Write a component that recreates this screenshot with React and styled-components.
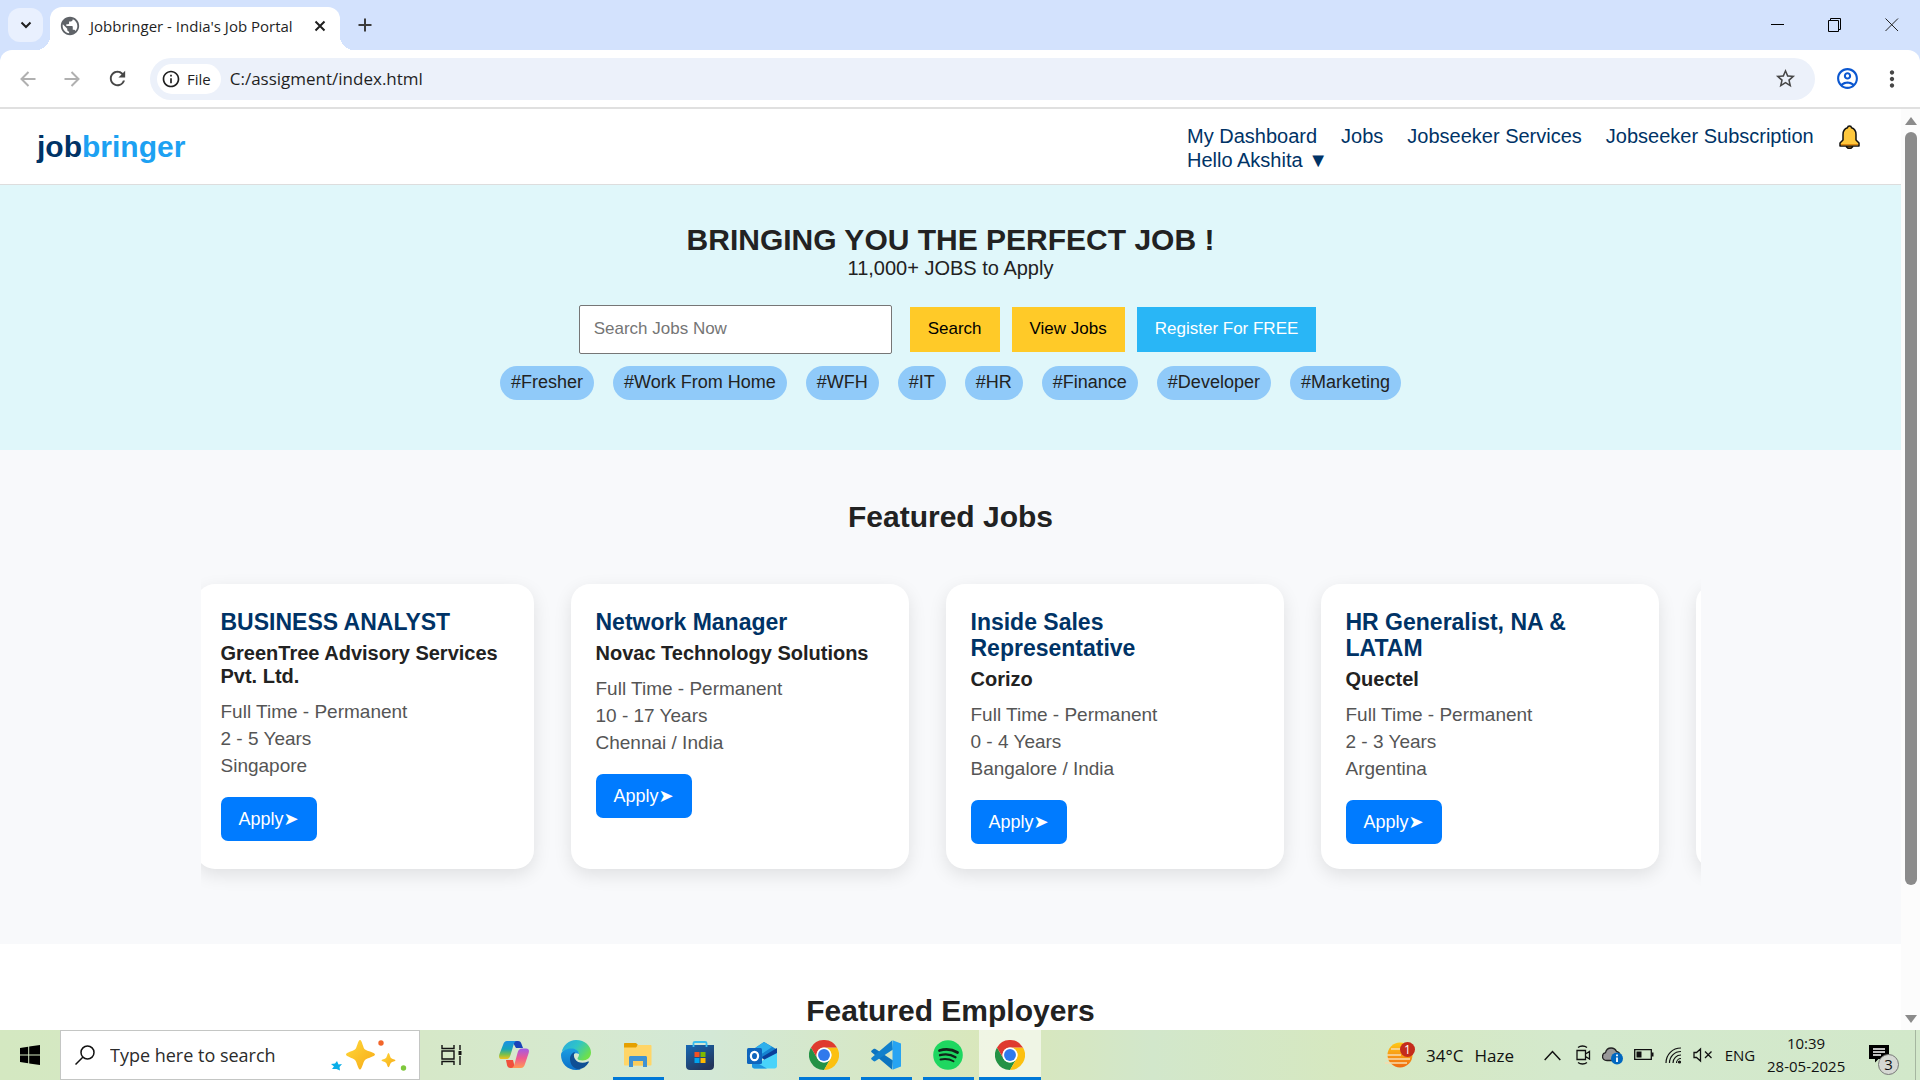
import React from "react";
import styled, { createGlobalStyle, css } from "styled-components";
import {
  MdPublic,
  MdStarBorder,
  MdOutlineAccountCircle,
  MdMoreVert,
  MdRefresh,
  MdInfoOutline,
} from "react-icons/md";

const uiFont = `"Segoe UI", "Open Sans", sans-serif`;
const pageFont = `Arial, "Liberation Sans", "DejaVu Sans", sans-serif`;

const GlobalStyle = createGlobalStyle`
  * { box-sizing: border-box; margin: 0; padding: 0; }
  body { overflow: hidden; background: #fff; }
  button, input { font: inherit; border: 0; background: none; color: inherit; }
  a { text-decoration: none; color: inherit; }
  svg { display: block; flex: none; }
`;

const Desktop = styled.div`
  height: 100vh;
  display: flex;
  flex-direction: column;
  font-family: ${uiFont};
`;

/* ---------- browser chrome ---------- */
const TabStrip = styled.header`
  display: flex;
  align-items: flex-end;
  height: 50px;
  padding-left: 8px;
  background: #d3e2fd;
`;
const TabSearch = styled.button`
  width: 35px;
  height: 34px;
  margin: 0 7px 8px 0;
  border-radius: 12px;
  background: #e9f0fe;
  display: grid;
  place-items: center;
`;
const Tab = styled.div`
  display: flex;
  align-items: center;
  width: 290px;
  height: 43px;
  padding: 0 11px 5px 9px;
  border-radius: 12px 12px 0 0;
  background: #fff;
  color: #1f1f1f;
  position: relative;
  &::before, &::after {
    content: "";
    position: absolute;
    bottom: 0;
    width: 14px;
    height: 14px;
  }
  &::before {
    left: -14px;
    background: radial-gradient(circle at 0 0, transparent 14px, #fff 14px);
  }
  &::after {
    right: -14px;
    background: radial-gradient(circle at 100% 0, transparent 14px, #fff 14px);
  }
`;
const TabTitle = styled.span`
  flex: 1;
  padding-left: 9px;
  font-size: 15px;
  line-height: 20px;
  white-space: nowrap;
`;
const PlainButton = styled.button`
  display: grid;
  place-items: center;
  width: ${(p) => p.$w || 44}px;
  height: ${(p) => p.$h || 44}px;
`;
const WindowButtons = styled.div`
  display: flex;
  margin-left: auto;
`;
const Toolbar = styled.div`
  display: flex;
  align-items: center;
  height: 59px;
  padding: 0 6px;
  background: #fff;
  border-radius: 12px 12px 0 0;
  border-bottom: 2px solid #e0e0e0;
  color: #474747;
`;
const ToolbarBack = styled.div`
  background: #d3e2fd;
  flex: none;
`;
const Omnibox = styled.div`
  flex: 1;
  display: flex;
  align-items: center;
  height: 42px;
  margin: 0 10px;
  padding: 0 18px 0 7px;
  border-radius: 21px;
  background: #ecf1fa;
`;
const FileChip = styled.button`
  display: flex;
  align-items: center;
  gap: 6px;
  height: 30px;
  padding: 0 10px 0 4px;
  border-radius: 15px;
  background: #fff;
  color: #1f1f1f;
  font-size: 15px;
  font-weight: 500;
`;
const Address = styled.input`
  flex: 1;
  padding-left: 9px;
  font-size: 17px;
  color: #1f1f1f;
  outline: none;
`;

/* ---------- web page ---------- */
const Viewport = styled.div`
  flex: 1;
  min-height: 0;
  display: flex;
  overflow: hidden;
  font-family: ${pageFont};
`;
const Page = styled.div`
  flex: 1;
  min-width: 0;
  height: 100%;
  overflow: hidden;
  color: #222;
  background: #fff;
`;
const Scrollbar = styled.div`
  width: 19px;
  padding: 8px 3px 7px 4px;
  display: flex;
  flex-direction: column;
  align-items: center;
  gap: 7px;
  background: #fcfcfc;
`;
const ScrollTrack = styled.div`
  flex: 1;
  width: 12px;
`;
const Thumb = styled.div`
  height: 86%;
  border-radius: 6px;
  background: #8b8b8b;
`;
const SiteHeader = styled.header`
  display: flex;
  justify-content: space-between;
  align-items: center;
  min-height: 76px;
  padding: 0 37px;
  border-bottom: 1px solid #ddd;
  color: #003366;
`;
const Logo = styled.a`
  font-size: 30px;
  line-height: 34px;
  font-weight: bold;
  span { color: #1da1f2; }
`;
const Nav = styled.nav`
  display: flex;
  flex-wrap: wrap;
  align-items: center;
  column-gap: 24px;
  max-width: 677px;
  padding-top: 3px;
  font-size: 20px;
  line-height: 23px;
`;
const Hero = styled.section`
  display: flex;
  flex-direction: column;
  align-items: center;
  padding: 38px 20px 50px;
  background: #e0f7fa;
  text-align: center;
`;
const Heading = styled.h2`
  font-size: 30px;
  line-height: 34px;
  text-align: center;
`;
const HeroText = styled.p`
  font-size: 20px;
  line-height: 23px;
`;
const SearchForm = styled.form`
  display: flex;
  align-items: center;
  margin: 25px 0 12px;
`;
const SearchInput = styled.input`
  width: 313px;
  height: 49px;
  margin-right: 12px;
  padding: 0 14px 2px;
  border: 1px solid #767676;
  border-radius: 2px;
  background: #fff;
  font-size: 17px;
  &::placeholder { color: #757575; opacity: 1; }
`;
const HeroButton = styled.button`
  height: 45px;
  margin: 0 6px;
  padding: 0 18px 2px;
  background: ${(p) => (p.$primary ? "#29b6f6" : "#ffca28")};
  color: ${(p) => (p.$primary ? "#fff" : "#000")};
  font-size: 17px;
`;
const Tags = styled.div`
  display: flex;
  gap: 19px;
`;
const Tag = styled.a`
  padding: 6px 11px 8px;
  border-radius: 17px;
  background: #90caf9;
  font-size: 18px;
  line-height: 20px;
`;
const Section = styled.section`
  padding: 50px 0;
  background: ${(p) => (p.$tint ? "#f8f9fb" : "#fff")};
`;
const Carousel = styled.div`
  max-width: 1500px;
  margin: 25px auto 0;
  padding: 25px 0;
  overflow: hidden;
`;
const Track = styled.div`
  display: flex;
  gap: 37px;
  margin-left: -5px;
`;
const Card = styled.article`
  flex: 0 0 338px;
  padding: 25px;
  border-radius: 19px;
  background: #fff;
  box-shadow: 0 6px 18px rgba(0, 0, 0, 0.1);
`;
const JobTitle = styled.h3`
  font-size: 23px;
  line-height: 26px;
  color: #003366;
`;
const Company = styled.h4`
  margin: 7px 0 13px;
  font-size: 20px;
  line-height: 23px;
`;
const Detail = styled.p`
  margin-bottom: 6px;
  font-size: 19px;
  line-height: 21px;
  color: #555;
`;
const ApplyButton = styled.button`
  height: 44px;
  margin-top: 15px;
  padding: 0 18px;
  border-radius: 7px;
  background: #007bff;
  color: #fff;
  font-size: 18px;
`;

/* ---------- taskbar ---------- */
const Taskbar = styled.footer`
  display: flex;
  height: 50px;
  flex: none;
  background: linear-gradient(90deg, #d4e8c1 0%, #d6e8c8 22%, #d6e9cf 30%, #d3e8d6 37%, #d9e7ba 52%, #d2e7cb 60%, #d6e8c0 70%, #d4e9cd 82%, #d2e8ca 100%);
  color: #111;
`;
const Tile = styled.button`
  position: relative;
  width: ${(p) => p.$w || 62}px;
  display: grid;
  place-items: center;
  ${(p) => p.$active && css`background: rgba(255, 255, 255, 0.6);`}
  ${(p) => (p.$running || p.$active) && css`
    &::after {
      content: "";
      position: absolute;
      bottom: 0;
      left: ${p.$active ? 0 : 6}px;
      right: ${p.$active ? 0 : 5}px;
      height: 3px;
      background: #0078d7;
    }
  `}
`;
const TaskSearch = styled.label`
  display: flex;
  align-items: center;
  width: 360px;
  padding: 0 11px 0 14px;
  border: 1px solid #c4c6c4;
  background: #fff;
`;
const TaskInput = styled.input`
  flex: 1;
  min-width: 0;
  padding-left: 15px;
  font-size: 18px;
  outline: none;
  &::placeholder { color: #2b2b2b; opacity: 1; }
`;
const Tray = styled.div`
  display: flex;
  align-items: center;
  margin-left: auto;
`;
const Weather = styled.button`
  display: flex;
  align-items: center;
  gap: 11px;
  margin-right: 30px;
  font-size: 17px;
`;
const TrayIcons = styled.div`
  display: flex;
  align-items: center;
  gap: 11px;
  svg:first-child { margin-right: 4px; }
`;
const Lang = styled.button`
  width: 54px;
  font-size: 15px;
`;
const Clock = styled.button`
  width: 78px;
  font-size: 15px;
  line-height: 23px;
  text-align: center;
  white-space: nowrap;
`;
const ActionCenter = styled.button`
  display: flex;
  align-items: center;
  width: 70px;
  height: 50px;
  padding-left: 24px;
`;
const ShowDesktop = styled.span`
  width: 5px;
  height: 50px;
  border-left: 1px solid #a5b6a0;
`;

/* ---------- icons ---------- */
const Stroke = ({ d, w, h, color = "#1f1f1f", sw = 2, ...rest }) => (
  <svg width={w} height={h} viewBox={`0 0 ${w} ${h}`} fill="none" stroke={color} strokeWidth={sw} {...rest}>
    <path d={d} />
  </svg>
);

const Bell = () => (
  <svg width="23" height="24" viewBox="0 0 23 24">
    <path d="M8.500 20h6v2l-1.500 1.200h-3L8.500 22z" fill="#c27a0e" stroke="#111" strokeWidth="1.500" />
    <path d="M11.500 1c1.200 0 1.900.8 2 1.800 3 1 4.500 3.500 4.500 6.700v5.500l3 3V21H2v-3l3-3V9.500c0-3.200 1.500-5.700 4.500-6.700.1-1 .8-1.800 2-1.800z" fill="#ffc83d" stroke="#111" strokeWidth="1.500" strokeLinejoin="round" />
    <path d="M3 19h17v1.300H3z" fill="#e08a12" />
  </svg>
);

const WindowsLogo = () => (
  <svg width="20" height="20" viewBox="0 0 20 20" fill="#000">
    <path d="M0 3l8.200-1.200v7.700H0zM9.200 1.600L20 0v9.500H9.200zM0 10.500h8.200v7.700L0 17zM9.200 10.500H20V20L9.200 18.400z" />
  </svg>
);

const Sparkles = () => (
  <svg width="78" height="34" viewBox="0 0 78 34">
    <defs>
      <linearGradient id="sp" x1="0" y1="0" x2="1" y2="1">
        <stop offset="0" stopColor="#ffd93b" />
        <stop offset="1" stopColor="#f7a916" />
      </linearGradient>
    </defs>
    <path d="M30 2c2 0 3 8 5 9.500s10 3 10 5-8 3.500-10 5.500-3 9.500-5 9.500-3-7.500-5-9.500-9-3.500-9-5.500 7-3.500 9-5S28 2 30 2z" fill="url(#sp)" />
    <path d="M58.500 15c1 0 1.500 4 2.500 5s4.500 1.300 4.500 2.300-3.500 1.500-4.500 2.500-1.500 4.500-2.500 4.500-1.500-3.500-2.500-4.500-4.500-1.500-4.500-2.500 3.500-1.300 4.500-2.300 1.500-5 2.500-5z" fill="url(#sp)" />
    <path d="M7 23l1.500 3.500L12 26l-2.500 3 .5 3.500L6.500 31 2 31l2-2.500L1 26l4-.5z" fill="#0aaee8" />
    <circle cx="51" cy="5" r="2.700" fill="#f2652a" />
    <circle cx="73.500" cy="30" r="2.700" fill="#7ec83c" />
  </svg>
);

const Copilot = () => (
  <svg width="30" height="28" viewBox="0 0 30 28">
    <defs>
      <linearGradient id="cpa" x1="0" y1="0" x2="0" y2="1">
        <stop offset="0" stopColor="#1b8fe6" />
        <stop offset=".45" stopColor="#16a5b8" />
        <stop offset=".75" stopColor="#7cc04b" />
        <stop offset="1" stopColor="#f5c21b" />
      </linearGradient>
      <linearGradient id="cpb" x1="0" y1="0" x2="0" y2="1">
        <stop offset="0" stopColor="#a05be8" />
        <stop offset=".5" stopColor="#ef5a8f" />
        <stop offset="1" stopColor="#ff9a55" />
      </linearGradient>
    </defs>
    <path d="M13 0h6c2 0 3 1 3.500 3L24 7h-7z" fill="#1a44b8" />
    <path d="M8 0h10c-2 0-3 2-3.500 4L11.500 14c-.8 3-2 4-4.500 4H3c-3 0-3.500-2-2.500-5L4 4c.8-2.500 2-4 4-4z" fill="url(#cpa)" />
    <path d="M16 27H11.500c-2 0-3-1-3.500-3L7 19h7z" fill="#f0503c" />
    <path d="M22 27H12c2 0 3-2 3.500-4L18.500 12c.8-3 2-4.500 4.500-4.500H27c3 0 3.500 2 2.500 5L26 23c-.8 2.500-2 4-4 4z" fill="url(#cpb)" />
  </svg>
);

const Edge = () => (
  <svg width="30" height="30" viewBox="0 0 30 30">
    <defs>
      <linearGradient id="eg1" x1="0" y1="0" x2="1" y2=".6">
        <stop offset="0" stopColor="#2aa8e0" />
        <stop offset=".5" stopColor="#2fc4c8" />
        <stop offset="1" stopColor="#6fe04a" />
      </linearGradient>
      <linearGradient id="eg2" x1="0" y1="0" x2="0" y2="1">
        <stop offset="0" stopColor="#1b9de2" />
        <stop offset="1" stopColor="#0c70c8" />
      </linearGradient>
    </defs>
    <path d="M.8 12C2 5 8 0 15 0c9 0 15 6 15 12.500 0 5-4 8-8.500 8-3 0-5-1-5-2s1.500-1.800 1.500-4c0-3-3-5.500-7-5.500C6 9 2 11 .8 12z" fill="url(#eg1)" />
    <path d="M0 15c0-4 5-6.500 10.500-6.500 4.500 0 7.500 2.500 7.500 5.500-4-2-7.500 1-7.500 5.500 0 5 4 9.500 9.500 9.800C18 30 16 30 15 30 6.500 30 0 23.500 0 15z" fill="url(#eg2)" />
    <path d="M9 19c0-4 2.500-6.500 5-7-1.500 2-1.500 4.500 0 7 2.500 4 8 5 13 2.500.8-.3 1.200.2.800.8-2.300 4.300-6 6.500-9.800 7C12.500 29 9 24 9 19z" fill="#0f4f94" />
  </svg>
);

const Explorer = () => (
  <svg width="28" height="24" viewBox="0 0 28 24">
    <path d="M1 0h11l1.500 1.500V5H0V1c0-.6.4-1 1-1z" fill="#e5a000" />
    <path d="M14 2h12.500c.6 0 1 .4 1 1v18.500c0 .6-.4 1-1 1H1c-.6 0-1-.4-1-1V4.500h12z" fill="#ffd567" />
    <path d="M5 24V14.500c0-1 .7-1.500 1.500-1.500h15c.8 0 1.500.5 1.500 1.500V24h-4v-6H9v6z" fill="#3f92d2" />
    <path d="M9 18h10v4.500H9z" fill="#f9cc5c" />
  </svg>
);

const Store = () => (
  <svg width="30" height="30" viewBox="0 0 30 30">
    <defs>
      <linearGradient id="st" x1="0" y1="0" x2=".6" y2="1">
        <stop offset="0" stopColor="#1668b4" />
        <stop offset="1" stopColor="#24365c" />
      </linearGradient>
    </defs>
    <path d="M1 5h28v21c0 2.500-1.500 4-4 4H5c-2.500 0-4-1.500-4-4z" fill="url(#st)" />
    <path d="M8.500 7V3c0-1 .5-1 1.500-1h10c1 0 1.500 0 1.500 1v4" fill="none" stroke="#39bdf0" strokeWidth="1.800" />
    <path d="M9.500 12h5v5h-5z" fill="#f25022" />
    <path d="M15.500 12h5v5h-5z" fill="#7fba00" />
    <path d="M9.500 18h5v5h-5z" fill="#00a4ef" />
    <path d="M15.500 18h5v5h-5z" fill="#ffb900" />
  </svg>
);

const Outlook = () => (
  <svg width="30" height="27" viewBox="0 0 30 27">
    <path d="M5 8L17 0l13 7.500V12L17 17 5 14z" fill="#1583d0" />
    <path d="M9 5.500L17 0l8 5-12 8z" fill="#2fb0ec" />
    <path d="M30 6L15 15l3 4 12-7z" fill="#0a3f9a" />
    <path d="M5 24l25-13v13c0 1.500-1 2.500-2.500 2.500H7.500C6 26.500 5 25.500 5 24z" fill="#49d3fa" />
    <path d="M5 18l15 8.500H7.500C6 26.500 5 25.500 5 24z" fill="#1f96e0" />
    <rect y="6" width="15" height="16" rx="1.500" fill="#0f65bd" />
    <ellipse cx="7.500" cy="14" rx="3.600" ry="4.200" fill="none" stroke="#fff" strokeWidth="2.200" />
  </svg>
);

const Chrome = () => (
  <svg width="30" height="30" viewBox="0 0 48 48">
    <path d="M3.200 12A24 24 0 0 0 24 48L34.400 30A12 12 0 0 1 13.600 30Z" fill="#249245" />
    <path d="M24 48A24 24 0 0 0 44.800 12L24 12A12 12 0 0 1 34.400 30Z" fill="#fcc010" />
    <path d="M44.800 12A24 24 0 0 0 3.200 12L13.600 30A12 12 0 0 1 24 12Z" fill="#df3a2f" />
    <circle cx="24" cy="24" r="12" fill="#fff" />
    <circle cx="24" cy="24" r="9.500" fill="#3079ec" />
  </svg>
);

const Code = () => (
  <svg width="30" height="30" viewBox="0 0 30 30">
    <path d="M2.500 9L.6 10.500c-.6.6-.6 1.200 0 1.800L21 29.500l1-9L4.500 9c-.7-.5-1.400-.5-2 0z" fill="#0c74c0" />
    <path d="M2.500 21L.6 19.500c-.6-.6-.6-1.200 0-1.800L21 .5l1 9L4.500 21c-.7.500-1.400.5-2 0z" fill="#1180cc" />
    <path d="M21.500.2L30 3.500v23l-8.500 3.300z" fill="#27a4f2" />
  </svg>
);

const Spotify = () => (
  <svg width="30" height="30" viewBox="0 0 30 30">
    <circle cx="15" cy="15" r="14.800" fill="#1ed760" />
    <g fill="none" stroke="#10251a" strokeLinecap="round">
      <path d="M6.500 10.500c6-1.800 13-1 18 2" strokeWidth="2.800" />
      <path d="M7 15.200c5-1.400 11-.8 15.500 2" strokeWidth="2.300" />
      <path d="M7.500 19.500c4.500-1 9-.6 13 1.800" strokeWidth="1.900" />
    </g>
  </svg>
);

const Haze = () => (
  <svg width="30" height="28" viewBox="0 0 30 28">
    <defs>
      <linearGradient id="hz" x1="0" y1="0" x2="0" y2="1">
        <stop offset="0" stopColor="#ffc917" />
        <stop offset="1" stopColor="#ef6a10" />
      </linearGradient>
    </defs>
    <circle cx="15" cy="14" r="12.500" fill="url(#hz)" />
    <path d="M6 8h9M2 14h14M1 18h24M0 22h22" stroke="#f8dcae" strokeWidth="1.600" />
    <circle cx="22.500" cy="8.500" r="7.500" fill="#c42b1c" />
    <text x="22.500" y="13" fontSize="12" fill="#fff" textAnchor="middle" fontFamily="Open Sans">1</text>
  </svg>
);

const MeetNow = () => (
  <svg width="15" height="20" viewBox="0 0 15 20" fill="none" stroke="#111" strokeWidth="1.300">
    <path d="M1 5.500h8.500v9H1zM9.500 9l4-2.500v7.500l-4-2.500M2 2.500c2.500-2 6.500-2 9 0M2 17.500c2.500 2 6.500 2 9 0" />
  </svg>
);

const Cloud = () => (
  <svg width="21" height="20" viewBox="0 0 21 20">
    <path d="M5 15.500c-3 0-4.500-1.800-4.500-4 0-2 1.300-3.500 3-3.800C4.200 4.500 6.500 3 9.200 3c2.500 0 4.300 1.300 5.200 3.300 1.800.3 3.100 1.400 3.600 3.200L10 15.500z" fill="#999" stroke="#222" strokeWidth="1.300" />
    <circle cx="15" cy="13.500" r="6" fill="#0067c0" />
    <path d="M15 12.500v4.500M15 9.500v1.700" stroke="#fff" strokeWidth="1.800" />
  </svg>
);

const Battery = () => (
  <svg width="20" height="12" viewBox="0 0 20 12">
    <path d="M.7.700h16.600v9.600H.7z" fill="none" stroke="#111" strokeWidth="1.300" />
    <path d="M18 3.500h1.500v4H18z" fill="#111" />
    <path d="M2.500 2.500h5v6h-5z" fill="#111" />
  </svg>
);

const Wifi = () => (
  <svg width="17" height="17" viewBox="0 0 17 17" fill="none" stroke="#111" strokeWidth="1.200">
    <path d="M1 16C1 7.500 7.500 1 16 1M4.500 16c0-6.500 5-11.500 11.500-11.500M8 16c0-4.500 3.500-8 8-8M11.500 16c0-2.500 2-4.500 4.500-4.500" />
    <circle cx="14.500" cy="15" r="1" fill="#111" />
  </svg>
);

const Muted = () => (
  <svg width="20" height="17" viewBox="0 0 20 17" fill="none" stroke="#111" strokeWidth="1.300">
    <path d="M1 5.500h2.500l4-3.500v12l-4-3.500H1zM12 4.500l6.500 6.500M18.500 4.500L12 11" />
  </svg>
);

const Notifications = () => (
  <svg width="32" height="28" viewBox="0 0 32 28" overflow="visible">
    <path d="M0 4h20v14H9.500L6 21.500V18H0z" fill="#000" />
    <path d="M4 8h12M4 11h12M4 14h8" stroke="#fff" strokeWidth="1.300" />
    <circle cx="19.500" cy="23.500" r="10" fill="#d5d8d3" stroke="#777" />
    <text x="19.500" y="29" fontSize="15" fill="#111" textAnchor="middle" fontFamily="Open Sans">3</text>
  </svg>
);

/* ---------- data ---------- */
const navLinks = ["My Dashboard", "Jobs", "Jobseeker Services", "Jobseeker Subscription"];
const tags = ["#Fresher", "#Work From Home", "#WFH", "#IT", "#HR", "#Finance", "#Developer", "#Marketing"];
const jobs = [
  { title: "BUSINESS ANALYST", company: "GreenTree Advisory Services Pvt. Ltd.", years: "2 - 5 Years", place: "Singapore" },
  { title: "Network Manager", company: "Novac Technology Solutions", years: "10 - 17 Years", place: "Chennai / India" },
  { title: "Inside Sales Representative", company: "Corizo", years: "0 - 4 Years", place: "Bangalore / India" },
  { title: "HR Generalist, NA & LATAM", company: "Quectel", years: "2 - 3 Years", place: "Argentina" },
];
const apps = [
  { name: "Copilot", Icon: Copilot },
  { name: "Edge", Icon: Edge },
  { name: "File Explorer", Icon: Explorer, running: true },
  { name: "Store", Icon: Store },
  { name: "Outlook", Icon: Outlook },
  { name: "Chrome", Icon: Chrome, running: true },
  { name: "Code", Icon: Code, running: true },
  { name: "Spotify", Icon: Spotify, running: true },
  { name: "Chrome window", Icon: Chrome, active: true },
];

function BrowserBar() {
  return (
    <>
      <TabStrip>
        <TabSearch aria-label="Search tabs">
          <Stroke w={12} h={8} d="M1.500 1.500L6 6l4.500-4.500" />
        </TabSearch>
        <Tab>
          <MdPublic size={22} color="#5f6368" />
          <TabTitle>Jobbringer - India's Job Portal</TabTitle>
          <PlainButton $w={18} $h={24} aria-label="Close tab">
            <Stroke w={12} h={12} d="M1.500 1.500l9 9M10.500 1.500l-9 9" />
          </PlainButton>
        </Tab>
        <PlainButton $w={50} $h={50} aria-label="New tab">
          <Stroke w={14} h={14} color="#3c3c3c" d="M7 .5v13M.5 7h13" />
        </PlainButton>
        <WindowButtons>
          <PlainButton $w={57} $h={50} aria-label="Minimize">
            <Stroke w={14} h={14} sw={1} color="#000" d="M0 6.500h13" />
          </PlainButton>
          <PlainButton $w={57} $h={50} aria-label="Restore">
            <Stroke w={14} h={14} sw={1} color="#000" d="M.5 2.500h10v11H.5zM2.500 2.500V.5h10v11h-2" />
          </PlainButton>
          <PlainButton $w={57} $h={50} aria-label="Close">
            <Stroke w={14} h={14} sw={1} color="#222" d="M.5.500l12.500 12.500M13 .5L.5 13" />
          </PlainButton>
        </WindowButtons>
      </TabStrip>
      <ToolbarBack>
        <Toolbar>
          <PlainButton $w={44} aria-label="Back">
            <Stroke w={16} h={16} color="#b0b0b0" d="M15.500 8H2M8.500 1L1.500 8l7 7" />
          </PlainButton>
          <PlainButton $w={44} aria-label="Forward">
            <Stroke w={16} h={16} color="#b0b0b0" d="M.5 8H14M7.500 1l7 7-7 7" />
          </PlainButton>
          <PlainButton $w={46} aria-label="Reload"><MdRefresh size={23} /></PlainButton>
          <Omnibox>
            <FileChip>
              <MdInfoOutline size={20} />
              File
            </FileChip>
            <Address aria-label="Address" defaultValue="C:/assigment/index.html" />
            <MdStarBorder size={23} />
          </Omnibox>
          <PlainButton $w={44} aria-label="Profile"><MdOutlineAccountCircle size={25} color="#0b57d0" /></PlainButton>
          <PlainButton $w={45} aria-label="Menu"><MdMoreVert size={26} /></PlainButton>
        </Toolbar>
      </ToolbarBack>
    </>
  );
}

function JobCard({ job }) {
  return (
    <Card>
      <JobTitle>{job.title}</JobTitle>
      <Company>{job.company}</Company>
      <Detail>Full Time - Permanent</Detail>
      <Detail>{job.years}</Detail>
      <Detail>{job.place}</Detail>
      <ApplyButton>Apply➤</ApplyButton>
    </Card>
  );
}

function Site() {
  return (
    <Page>
      <SiteHeader>
        <Logo href="#">job<span>bringer</span></Logo>
        <Nav>
          {navLinks.map((n) => <a key={n} href="#">{n}</a>)}
          <a href="#" aria-label="Notifications"><Bell /></a>
          <a href="#">Hello Akshita ▼</a>
        </Nav>
      </SiteHeader>
      <Hero>
        <Heading as="h1">BRINGING YOU THE PERFECT JOB !</Heading>
        <HeroText>11,000+ JOBS to Apply</HeroText>
        <SearchForm onSubmit={(e) => e.preventDefault()}>
          <SearchInput aria-label="Search jobs" placeholder="Search Jobs Now" />
          <HeroButton type="submit">Search</HeroButton>
          <HeroButton type="button">View Jobs</HeroButton>
          <HeroButton type="button" $primary>Register For FREE</HeroButton>
        </SearchForm>
        <Tags>{tags.map((t) => <Tag key={t} href="#">{t}</Tag>)}</Tags>
      </Hero>
      <Section $tint>
        <Heading>Featured Jobs</Heading>
        <Carousel>
          <Track>
            {jobs.map((j) => <JobCard key={j.title} job={j} />)}
            <Card aria-hidden="true" />
          </Track>
        </Carousel>
      </Section>
      <Section>
        <Heading>Featured Employers</Heading>
      </Section>
    </Page>
  );
}

export default function App() {
  return (
    <Desktop>
      <GlobalStyle />
      <BrowserBar />
      <Viewport>
        <Site />
        <Scrollbar>
          <svg width="12" height="8" viewBox="0 0 12 8"><path d="M6 0l6 8H0z" fill="#8b8b8b" /></svg>
          <ScrollTrack><Thumb /></ScrollTrack>
          <svg width="12" height="8" viewBox="0 0 12 8"><path d="M6 8l6-8H0z" fill="#8b8b8b" /></svg>
        </Scrollbar>
      </Viewport>
      <Taskbar>
        <Tile $w={60} aria-label="Start"><WindowsLogo /></Tile>
        <TaskSearch>
          <svg width="20" height="20" viewBox="0 0 20 20" fill="none" stroke="#111" strokeWidth="1.500">
            <circle cx="12.500" cy="7.500" r="6.500" />
            <path d="M8 12L.5 19.500" />
          </svg>
          <TaskInput aria-label="Search" placeholder="Type here to search" />
          <Sparkles />
        </TaskSearch>
        <Tile $w={63} aria-label="Task view">
          <Stroke w={22} h={20} sw={1.4} color="#111" d="M1 0v3.500h12V0M1 20v-3.500h12V20M1 6h12v8H1zM19 0v5M19 11v9M17.500 8h3M17.500 6.800h3M17.500 9.200h3" />
        </Tile>
        {apps.map(({ name, Icon, running, active }) => (
          <Tile key={name} aria-label={name} $running={running} $active={active}><Icon /></Tile>
        ))}
        <Tray>
          <Weather><Haze /><span>34°C</span><span>Haze</span></Weather>
          <TrayIcons>
            <Stroke w={17} h={11} sw={1.500} color="#111" d="M.7 10l7.800-8.500L16.300 10" />
            <MeetNow />
            <Cloud />
            <Battery />
            <Wifi />
            <Muted />
          </TrayIcons>
          <Lang>ENG</Lang>
          <Clock>10:39<br />28-05-2025</Clock>
          <ActionCenter aria-label="Notification centre"><Notifications /></ActionCenter>
          <ShowDesktop />
        </Tray>
      </Taskbar>
    </Desktop>
  );
}
